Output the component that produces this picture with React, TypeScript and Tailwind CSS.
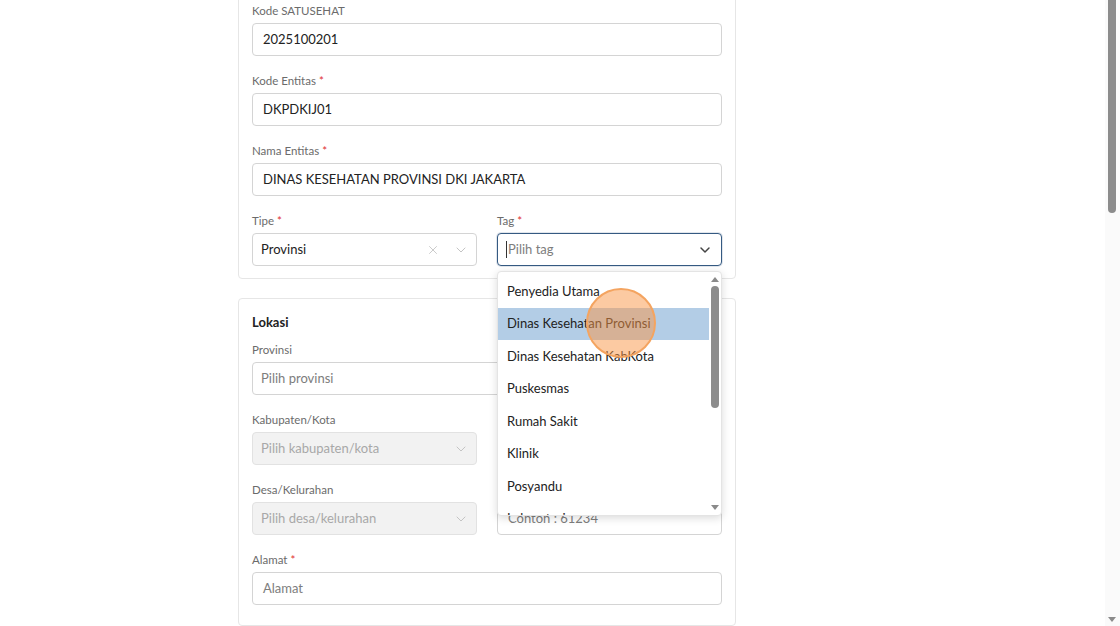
import { ChevronDown, X } from "lucide-react";

const font = { fontFamily: "Lato, 'Liberation Sans', sans-serif" };

function Label({ text, required }: { text: string; required?: boolean }) {
  return (
    <div className="mb-[4px] h-[16px] text-[11.5px] leading-[16px] text-[#6b6b6b]">
      {text}
      {required && <span className="ml-[3px] text-[#e03131]">*</span>}
    </div>
  );
}

function TextInput({ value, placeholder }: { value?: string; placeholder?: string }) {
  return (
    <div className="flex h-[33px] items-center rounded-[4px] border border-[#d4d4d4] bg-white px-[10px] text-[13px]">
      {value ? (
        <span className="text-[#222]">{value}</span>
      ) : (
        <span className="text-[#7d7d7d]">{placeholder}</span>
      )}
    </div>
  );
}

function Select({
  value,
  placeholder,
  disabled,
  clearable,
}: {
  value?: string;
  placeholder?: string;
  disabled?: boolean;
  clearable?: boolean;
}) {
  return (
    <div
      className={
        disabled
          ? "flex h-[33px] items-center rounded-[4px] border border-[#e2e2e2] bg-[#f2f2f2] pl-[8px] pr-[7px] text-[13px]"
          : "flex h-[33px] items-center rounded-[4px] border border-[#d4d4d4] bg-white pl-[8px] pr-[7px] text-[13px]"
      }
    >
      <span className={value ? "flex-1 text-[#222]" : disabled ? "flex-1 text-[#a8a8a8]" : "flex-1 text-[#7d7d7d]"}>
        {value || placeholder}
      </span>
      {clearable && <X size={14} strokeWidth={1.5} className="mr-[13px] text-[#c4c4c4]" />}
      <ChevronDown size={16} strokeWidth={1.5} className="text-[#c4c4c4]" />
    </div>
  );
}

const tags = [
  "Penyedia Utama",
  "Dinas Kesehatan Provinsi",
  "Dinas Kesehatan KabKota",
  "Puskesmas",
  "Rumah Sakit",
  "Klinik",
  "Posyandu",
  "Laboratorium",
];

function TagDropdown() {
  return (
    <div className="absolute left-0 top-[38px] z-10 flex h-[245px] w-full overflow-hidden rounded-[4px] border border-[#e4e4e4] bg-white shadow-[0_2px_8px_rgba(0,0,0,0.15)]">
      <div className="flex-1 overflow-hidden pt-[3px]">
        {tags.map((t, i) => (
          <div
            key={t}
            className={
              i === 1
                ? "flex h-[32.5px] items-center bg-[#b3cde6] px-[9px] text-[13px] text-[#222]"
                : "flex h-[32.5px] items-center px-[9px] text-[13px] text-[#222]"
            }
          >
            {t}
          </div>
        ))}
      </div>
      <div className="relative w-[12px]">
        <div className="absolute left-[2px] top-[5px] h-0 w-0 border-x-[4px] border-b-[5px] border-x-transparent border-b-[#8a8a8a]" />
        <div className="absolute left-[2px] top-[14px] h-[122px] w-[8px] rounded-full bg-[#8c8c8c]" />
        <div className="absolute bottom-[5px] left-[2px] h-0 w-0 border-x-[4px] border-t-[5px] border-x-transparent border-t-[#8a8a8a]" />
      </div>
    </div>
  );
}

export default function App() {
  return (
    <div className="flex h-[626px] w-[1120px] overflow-hidden bg-white" style={font}>
      <main className="relative flex-1 pl-[238px]">
        <div className="w-[498px]">
          <section className="mt-[-12px] rounded-b-[4px] border border-[#e6e6e6] px-[13px] pb-[12px] pt-[14px]">
            <Label text="Kode SATUSEHAT" />
            <TextInput value="2025100201" />
            <div className="mt-[17px]">
              <Label text="Kode Entitas" required />
              <TextInput value="DKPDKIJ01" />
            </div>
            <div className="mt-[17px]">
              <Label text="Nama Entitas" required />
              <TextInput value="DINAS KESEHATAN PROVINSI DKI JAKARTA" />
            </div>
            <div className="mt-[17px] grid grid-cols-2 gap-x-[20px]">
              <div>
                <Label text="Tipe" required />
                <Select value="Provinsi" clearable />
              </div>
              <div className="relative">
                <Label text="Tag" required />
                <div className="relative">
                  <div className="flex h-[33px] items-center rounded-[4px] border-[1.5px] border-[#355a82] bg-white pl-[8px] pr-[8px] text-[13px] shadow-[0_0_0_1px_rgba(53,90,130,0.15)]">
                    <span className="mr-[1px] h-[17px] w-[1px] bg-[#333]" />
                    <span className="flex-1 text-[#7d7d7d]">Pilih tag</span>
                    <ChevronDown size={16} strokeWidth={2.2} className="text-[#444]" />
                  </div>
                  <TagDropdown />
                </div>
              </div>
            </div>
          </section>

          <section className="mt-[19px] rounded-[4px] border border-[#e6e6e6] px-[13px] pb-[20px] pt-[15px]">
            <h3 className="h-[16px] text-[13px] font-bold leading-[16px] text-[#222]">Lokasi</h3>
            <div className="mt-[12px]">
              <Label text="Provinsi" />
              <Select placeholder="Pilih provinsi" />
            </div>
            <div className="mt-[17px] grid grid-cols-2 gap-x-[20px] gap-y-[17px]">
              <div>
                <Label text="Kabupaten/Kota" />
                <Select placeholder="Pilih kabupaten/kota" disabled />
              </div>
              <div>
                <Label text="Kecamatan" />
                <Select placeholder="Pilih kecamatan" disabled />
              </div>
              <div>
                <Label text="Desa/Kelurahan" />
                <Select placeholder="Pilih desa/kelurahan" disabled />
              </div>
              <div>
                <Label text="Kode Pos" />
                <TextInput placeholder="Contoh : 61234" />
              </div>
            </div>
            <div className="mt-[17px]">
              <Label text="Alamat" required />
              <TextInput placeholder="Alamat" />
            </div>
          </section>
        </div>

        <div className="pointer-events-none absolute left-[586px] top-[288px] z-20 h-[70px] w-[70px] rounded-full border-2 border-[#f4a460] bg-[rgba(250,150,70,0.5)]" />
      </main>

      <div className="relative w-[15px] bg-[#fafafa]">
        <div className="absolute left-[3px] top-0 h-[213px] w-[8px] rounded-b-full bg-[#8c8c8c]" />
        <div className="absolute bottom-[4px] left-[3px] h-0 w-0 border-x-[4px] border-t-[5px] border-x-transparent border-t-[#8a8a8a]" />
      </div>
    </div>
  );
}
